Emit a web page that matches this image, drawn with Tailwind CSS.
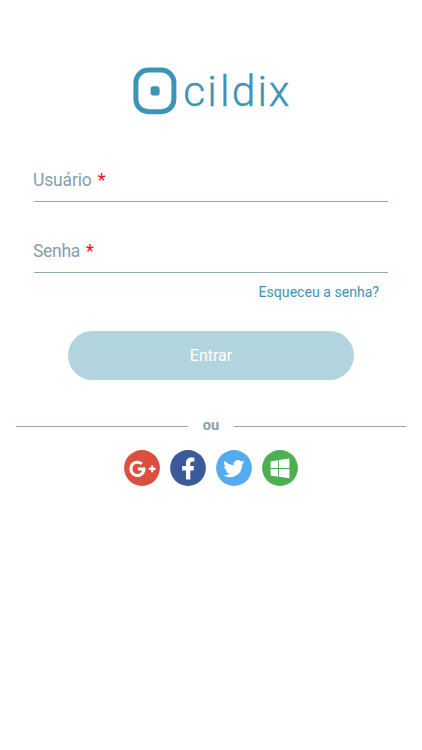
<!DOCTYPE html>
<html lang="pt-BR">
<head>
<meta charset="utf-8">
<meta name="viewport" content="width=device-width, initial-scale=1">
<title>cildix</title>
<script src="https://cdn.jsdelivr.net/npm/@tailwindcss/browser@4"></script>
</head>
<body class="bg-white font-['Roboto',sans-serif] text-[#84a1ab]">
<main class="flex h-[750px] w-[422px] flex-col overflow-hidden pt-[66px]">
  <header class="flex h-[50px] justify-center">
    <svg class="h-[50px] w-[160px]" viewBox="0 0 160 50" role="img" aria-label="cildix">
      <rect x="4.9" y="4.1" width="38" height="41.6" rx="12.5" fill="none" stroke="#3c95b5" stroke-width="5"/>
      <rect x="19.6" y="20.2" width="9" height="9.4" rx="2.8" fill="#3c95b5"/>
      <text x="52.2 76.3 89 100.8 126.5 137.8" y="40" fill="#3c95b5" stroke="#3c95b5" stroke-width=".4" font-family="Roboto, sans-serif" font-weight="300" font-size="42.5">cildix</text>
    </svg>
  </header>
  <form class="flex flex-col">
    <div class="mt-[50px] ml-[34px] flex h-[36px] w-[354px] items-start border-b border-[#8fabb4]">
      <label class="-ml-px flex gap-[6px] text-[17.5px] leading-[28px] tracking-[-0.15px]"><span>Usuário</span><span class="font-medium text-[#f01818]">*</span></label>
    </div>
    <div class="mt-[35px] ml-[34px] flex h-[36px] w-[354px] items-start border-b border-[#8fabb4]">
      <label class="-ml-px flex gap-[6px] text-[17.5px] leading-[28px] tracking-[-0.3px]"><span>Senha</span><span class="font-medium text-[#f01818]">*</span></label>
    </div>
    <a class="mt-[9px] mr-[43px] self-end text-[14.1px] leading-5 text-[#3c95b5]">Esqueceu a senha?</a>
    <button type="button" class="mt-[29px] ml-[68px] h-[49px] w-[286px] rounded-full bg-[#b2d4de] text-[16px] text-white">Entrar</button>
  </form>
  <div class="mt-[36px] ml-[16px] flex h-5 w-[390px] items-center">
    <div class="h-px w-[172px] bg-[#8fabb4]"></div>
    <span class="w-[46px] text-center text-[14.5px] leading-5 font-bold">ou</span>
    <div class="h-px w-[172px] bg-[#8fabb4]"></div>
  </div>
  <nav class="mt-[14px] flex justify-center gap-[10px]">
    <svg class="size-9" viewBox="0 0 36 36" aria-label="Google+">
      <circle cx="18" cy="18" r="17.9" fill="#dc4e3d"/>
      <path d="M17.9 14A6.6 6.6 0 1 0 20 19.1H13.8" fill="none" stroke="#fff" stroke-width="3"/>
      <path d="M28.2 15.5v6.8M24.8 18.9h6.8" fill="none" stroke="#fff" stroke-width="2.2"/>
    </svg>
    <svg class="size-9" viewBox="0 0 36 36" aria-label="Facebook">
      <circle cx="18" cy="18" r="17.9" fill="#3b5a9a"/>
      <path d="M16 29.5V20.4h-3.9v-4.4H16v-3c0-3.5 2.2-5.4 5.5-5.4 1.1 0 2.1.1 2.8.2v3.7h-2c-1.5 0-2 .8-2 2V16h3.8l-.6 4.4h-3.2v9.1z" fill="#fff"/>
    </svg>
    <svg class="size-9" viewBox="0 0 36 36" aria-label="Twitter">
      <circle cx="18" cy="18" r="17.9" fill="#55abee"/>
      <path transform="translate(7.4 8.1) scale(.875)" d="M23.95 4.57a10 10 0 0 1-2.82.77 4.96 4.96 0 0 0 2.16-2.72c-.95.55-2 .96-3.13 1.18a4.92 4.92 0 0 0-8.38 4.48C7.69 8.1 4.07 6.13 1.64 3.16a4.92 4.92 0 0 0 1.52 6.57 4.9 4.9 0 0 1-2.23-.61v.06a4.92 4.92 0 0 0 3.95 4.83 5 5 0 0 1-2.21.08 4.94 4.94 0 0 0 4.6 3.42A9.87 9.87 0 0 1 0 19.54a14 14 0 0 0 7.55 2.21c9.05 0 14-7.5 14-13.98 0-.21 0-.42-.02-.63a9.94 9.94 0 0 0 2.46-2.55z" fill="#fff"/>
    </svg>
    <svg class="size-9" viewBox="0 0 36 36" aria-label="Windows">
      <circle cx="18" cy="18" r="17.9" fill="#4caf50"/>
      <path d="M8.6 11.4l7.5-1.2v7.9H8.6zM17 10l10.4-1.5v9.6H17zM8.6 19h7.5v7.7l-7.5-1.1zM17 19h10.4v9.3L17 26.8z" fill="#fff"/>
    </svg>
  </nav>
</main>
</body>
</html>
